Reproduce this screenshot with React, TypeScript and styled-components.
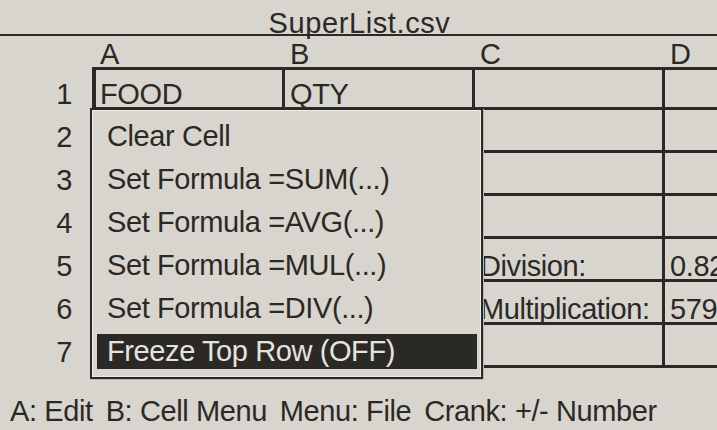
import styled, { createGlobalStyle } from 'styled-components';

const INK = '#2b2925';
const PAPER = '#d8d5ce';

const GlobalStyle = createGlobalStyle`
  html, body { margin: 0; padding: 0; background: ${PAPER}; }
  body { font-family: "Liberation Sans", Arial, sans-serif; color: ${INK}; }
`;

const Screen = styled.div`
  position: relative;
  width: 717px;
  height: 430px;
  overflow: hidden;
  display: flex;
  flex-direction: column;
  background: ${PAPER};
  font-size: 29px;
  letter-spacing: -0.4px;
`;

const Title = styled.div`
  box-sizing: border-box;
  height: 34px;
  padding-top: 9px;
  line-height: 28px;
  text-align: center;
  letter-spacing: 0.6px;
  padding-left: 2px;
`;

const Rule = styled.div`
  position: relative;
  height: 2px;
  background: ${INK};
`;

const Sheet = styled.div`
  display: flex;
  flex-direction: column;
`;

const Row = styled.div`
  display: flex;
  flex-shrink: 0;
`;

const HeaderCell = styled.div<{ $label?: boolean }>`
  box-sizing: border-box;
  flex: 0 0 ${({ $label }) => ($label ? '95px' : '190px')};
  height: 31px;
  padding-left: 5px;
  display: flex;
  align-items: flex-end;
  line-height: 26px;
`;

const Cell = styled.div<{ $label?: boolean; $first?: boolean; $selected?: boolean }>`
  position: relative;
  box-sizing: border-box;
  flex: 0 0 ${({ $label }) => ($label ? '95px' : '190px')};
  height: 43px;
  display: flex;
  align-items: flex-end;
  justify-content: ${({ $label }) => ($label ? 'flex-end' : 'flex-start')};
  padding: ${({ $label }) => ($label ? '0 20px 0 0' : '0 4px 0 5px')};
  line-height: 26px;
  white-space: nowrap;
  overflow: ${({ $selected }) => ($selected ? 'visible' : 'hidden')};
  border-bottom: 3px solid ${({ $label }) => ($label ? 'transparent' : INK)};
  border-right: 3px solid ${({ $label }) => ($label ? 'transparent' : INK)};
  border-top: ${({ $first, $label }) => ($first ? `3px solid ${$label ? 'transparent' : INK}` : 'none')};

  ${({ $selected }) =>
    $selected &&
    `
    &::before {
      content: '';
      position: absolute;
      left: -3px;
      top: -3px;
      right: -3px;
      bottom: -3px;
      border: 3px solid ${INK};
      border-left-width: 4px;
      border-bottom-width: 3px;
      pointer-events: none;
    }
  `}
`;

const Menu = styled.div`
  position: absolute;
  left: 90px;
  top: 108px;
  width: 393px;
  height: 271px;
  box-sizing: border-box;
  background: ${PAPER};
  border: 2px solid ${INK};
  box-shadow: inset 0 0 0 1px #eeebe4, 1px 1px 0 #b9b6af;
  padding: 9px 4px 8px 5px;
  display: flex;
  flex-direction: column;
  gap: 8px;
`;

const MenuItem = styled.div<{ $active?: boolean }>`
  height: 35px;
  line-height: 35px;
  padding-left: 10px;
  white-space: nowrap;
  background: ${({ $active }) => ($active ? INK : 'transparent')};
  color: ${({ $active }) => ($active ? '#e6e3dc' : INK)};
`;

const Footer = styled.div`
  flex: 1;
  display: flex;
  gap: 13px;
  padding: 29px 0 0 10px;
  line-height: 29px;
  white-space: nowrap;
`;

const columns = ['A', 'B', 'C', 'D'];

const data: string[][] = [
  ['FOOD', 'QTY', '', ''],
  ['', '', '', ''],
  ['', '', '', ''],
  ['', '', '', ''],
  ['', '', 'Division:', '0.8235'],
  ['', '', 'Multiplication:', '5796'],
  ['', '', '', ''],
];

const menuItems = [
  'Clear Cell',
  'Set Formula =SUM(...)',
  'Set Formula =AVG(...)',
  'Set Formula =MUL(...)',
  'Set Formula =DIV(...)',
  'Freeze Top Row (OFF)',
];

const hints = ['A: Edit', 'B: Cell Menu', 'Menu: File', 'Crank: +/- Number'];

export default function App() {
  return (
    <>
      <GlobalStyle />
      <Screen>
        <Title>SuperList.csv</Title>
        <Rule />
        <Sheet>
          <Row>
            <HeaderCell $label />
            {columns.map((c) => (
              <HeaderCell key={c}>{c}</HeaderCell>
            ))}
          </Row>
          {data.map((row, r) => (
            <Row key={r}>
              <Cell $label $first={r === 0}>{r + 1}</Cell>
              {row.map((value, c) => (
                <Cell key={c} $first={r === 0} $selected={r === 0 && c === 0}>
                  {value}
                </Cell>
              ))}
            </Row>
          ))}
        </Sheet>
        <Footer>
          {hints.map((h) => (
            <span key={h}>{h}</span>
          ))}
        </Footer>
        <Menu>
          {menuItems.map((item, i) => (
            <MenuItem key={item} $active={i === menuItems.length - 1}>
              {item}
            </MenuItem>
          ))}
        </Menu>
      </Screen>
    </>
  );
}
